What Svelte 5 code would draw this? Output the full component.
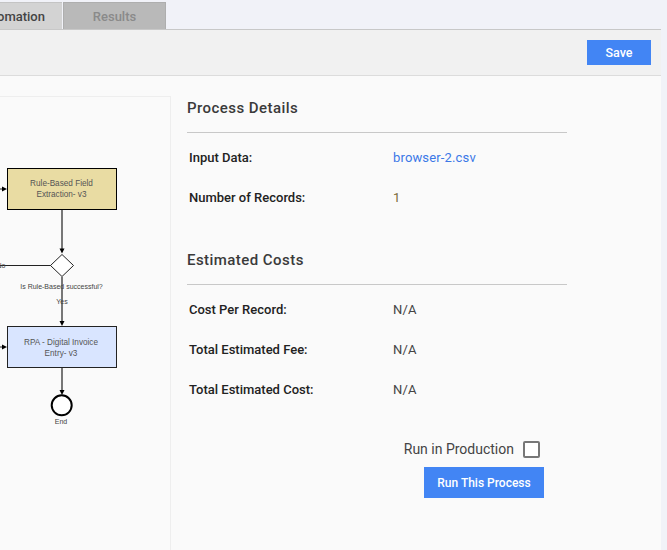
<script>
  const details = [
    { label: "Input Data:", value: "browser-2.csv", kind: "link" },
    { label: "Number of Records:", value: "1", kind: "count" },
  ];
  const costs = [
    { label: "Cost Per Record:", value: "N/A" },
    { label: "Total Estimated Fee:", value: "N/A" },
    { label: "Total Estimated Cost:", value: "N/A" },
  ];
</script>

<div class="page">
  <div class="tabs">
    <div class="tab first">Automation</div>
    <div class="tab results">Results</div>
  </div>

  <div class="toolbar">
    <button class="btn save">Save</button>
  </div>

  <div class="content">
    <div class="diagram">
      <svg width="170" height="454" viewBox="0 96 170 454">
        <g fill="none">
          <path d="M62 210V249" stroke="#777" stroke-width="2" />
          <path d="M62 277V321" stroke="#777" stroke-width="2" />
          <path d="M62 368V390" stroke="#777" stroke-width="2" />
          <path d="M0 265.5H51" stroke="#222" />
          <path d="M0 189H3" stroke="#222" />
          <path d="M0 347H3" stroke="#222" />
        </g>
        <path d="M59.5 248.5h5l-2.500 5z" />
        <path d="M59.500 321h5l-2.500 5z" />
        <path d="M59.500 390h5l-2.500 5z" />
        <path d="M2 186.500l5 2.500-5 2.500z" />
        <path d="M2 344.500l5 2.500-5 2.500z" />

        <rect x="7.500" y="168.500" width="109" height="41" fill="#e9dca3" stroke="#000" />
        <text x="61.500" y="186" class="node">Rule-Based Field</text>
        <text x="61.500" y="197" class="node">Extraction- v3</text>

        <path d="M62 254.500L73.500 265.500L62 276.500L50.500 265.500Z" fill="#fff" stroke="#222" />
        <text x="61.500" y="289" class="small">Is Rule-Based successful?</text>
        <text x="62" y="304" class="small">Yes</text>
        <text x="1" y="268" class="small">No</text>

        <rect x="7.500" y="326.500" width="109" height="41" fill="#d9e5ff" stroke="#222" />
        <text x="61" y="345" class="node">RPA - Digital Invoice</text>
        <text x="61" y="356" class="node">Entry- v3</text>

        <circle cx="61.700" cy="405.300" r="10" fill="#fff" stroke="#000" stroke-width="2" />
        <text x="61" y="424" class="small">End</text>
      </svg>
    </div>

    <div class="info">
      <h2>Process Details</h2>
      {#each details as row}
        <div class="row">
          <span class="label">{row.label}</span>
          <span class={row.kind}>{row.value}</span>
        </div>
      {/each}

      <h2 class="second">Estimated Costs</h2>
      {#each costs as row}
        <div class="row">
          <span class="label">{row.label}</span>
          <span>{row.value}</span>
        </div>
      {/each}

      <div class="actions">
        <label class="production">
          Run in Production
          <span class="check"></span>
        </label>
        <button class="btn run">Run This Process</button>
      </div>
    </div>
  </div>
</div>

<style>
  :global(body) {
    margin: 0;
    background: #f1f2f8;
  }
  .page {
    width: 661px;
    height: 550px;
    display: flex;
    flex-direction: column;
    font-family: Roboto, "Liberation Sans", sans-serif;
    color: #333;
    overflow: hidden;
  }
  .tabs {
    display: flex;
    height: 30px;
    box-sizing: border-box;
    padding-top: 2px;
    gap: 1px;
    border-bottom: 1px solid #c8c8c8;
    width: 667px;
  }
  .tab {
    font-size: 13px;
    font-weight: 500;
    display: flex;
    align-items: center;
    box-sizing: border-box;
  }
  .first {
    width: 62px;
    justify-content: flex-end;
    padding-right: 17px;
    background: #d3d3d3;
    border-top: 1px solid #c4c4c4;
    color: #444;
    white-space: nowrap;
  }
  .results {
    width: 103px;
    justify-content: center;
    background: #b9b9b9;
    border: 1px solid #aeaeae;
    border-bottom: none;
    color: #8a8a8a;
  }
  .toolbar {
    height: 46px;
    box-sizing: border-box;
    background: #f1f1f1;
    border-bottom: 1px solid #dcdcdc;
    display: flex;
    justify-content: flex-end;
    align-items: flex-start;
    padding: 10px 10px 0 0;
  }
  .btn {
    background: #4285f4;
    color: #fff;
    border: none;
    border-radius: 0;
    font-family: inherit;
    font-weight: 500;
    font-size: 12px;
    padding: 0;
  }
  .save {
    width: 64px;
    height: 25px;
    font-size: 12.5px;
  }
  .content {
    flex: 1;
    background: #fafafa;
    display: flex;
    padding-top: 20px;
  }
  .diagram {
    width: 171px;
    box-sizing: border-box;
    border-top: 1px solid #eeeeee;
    border-right: 1px solid #eeeeee;
    margin-right: 16px;
    flex: none;
  }
  svg {
    display: block;
    margin-top: -1px;
  }
  .node {
    font-size: 8.2px;
    font-family: "Liberation Sans", sans-serif;
    text-anchor: middle;
    fill: #555;
  }
  .small {
    font-size: 7px;
    font-family: "Liberation Sans", sans-serif;
    text-anchor: middle;
    fill: #444;
  }
  .info {
    width: 380px;
    font-size: 13px;
  }
  h2 {
    margin: 0 0 4px;
    height: 37px;
    box-sizing: border-box;
    padding-top: 3px;
    font-size: 15px;
    font-weight: 500;
    letter-spacing: 0.45px;
    color: #3a3a3a;
    border-bottom: 1px solid #c8c8c8;
    line-height: 18px;
  }
  h2.second {
    margin-top: 31px;
  }
  .row {
    display: flex;
    align-items: center;
    height: 40px;
    padding-left: 2px;
    color: #444;
    letter-spacing: 0.15px;
  }
  .label {
    width: 204px;
    font-weight: 500;
    color: #222;
    letter-spacing: 0;
  }
  .link {
    color: #3b78e7;
  }
  .count {
    color: #7a6a3a;
  }
  .actions {
    display: flex;
    flex-direction: column;
    align-items: flex-end;
    padding-right: 23px;
    margin-top: 30px;
  }
  .production {
    display: flex;
    align-items: center;
    gap: 9px;
    font-size: 14px;
    color: #444;
    height: 20px;
    margin-right: 4px;
  }
  .check {
    width: 13px;
    height: 13px;
    border: 2px solid #777;
    border-radius: 2px;
    background: #fff;
  }
  .run {
    margin-top: 8px;
    width: 120px;
    height: 31px;
  }
</style>
